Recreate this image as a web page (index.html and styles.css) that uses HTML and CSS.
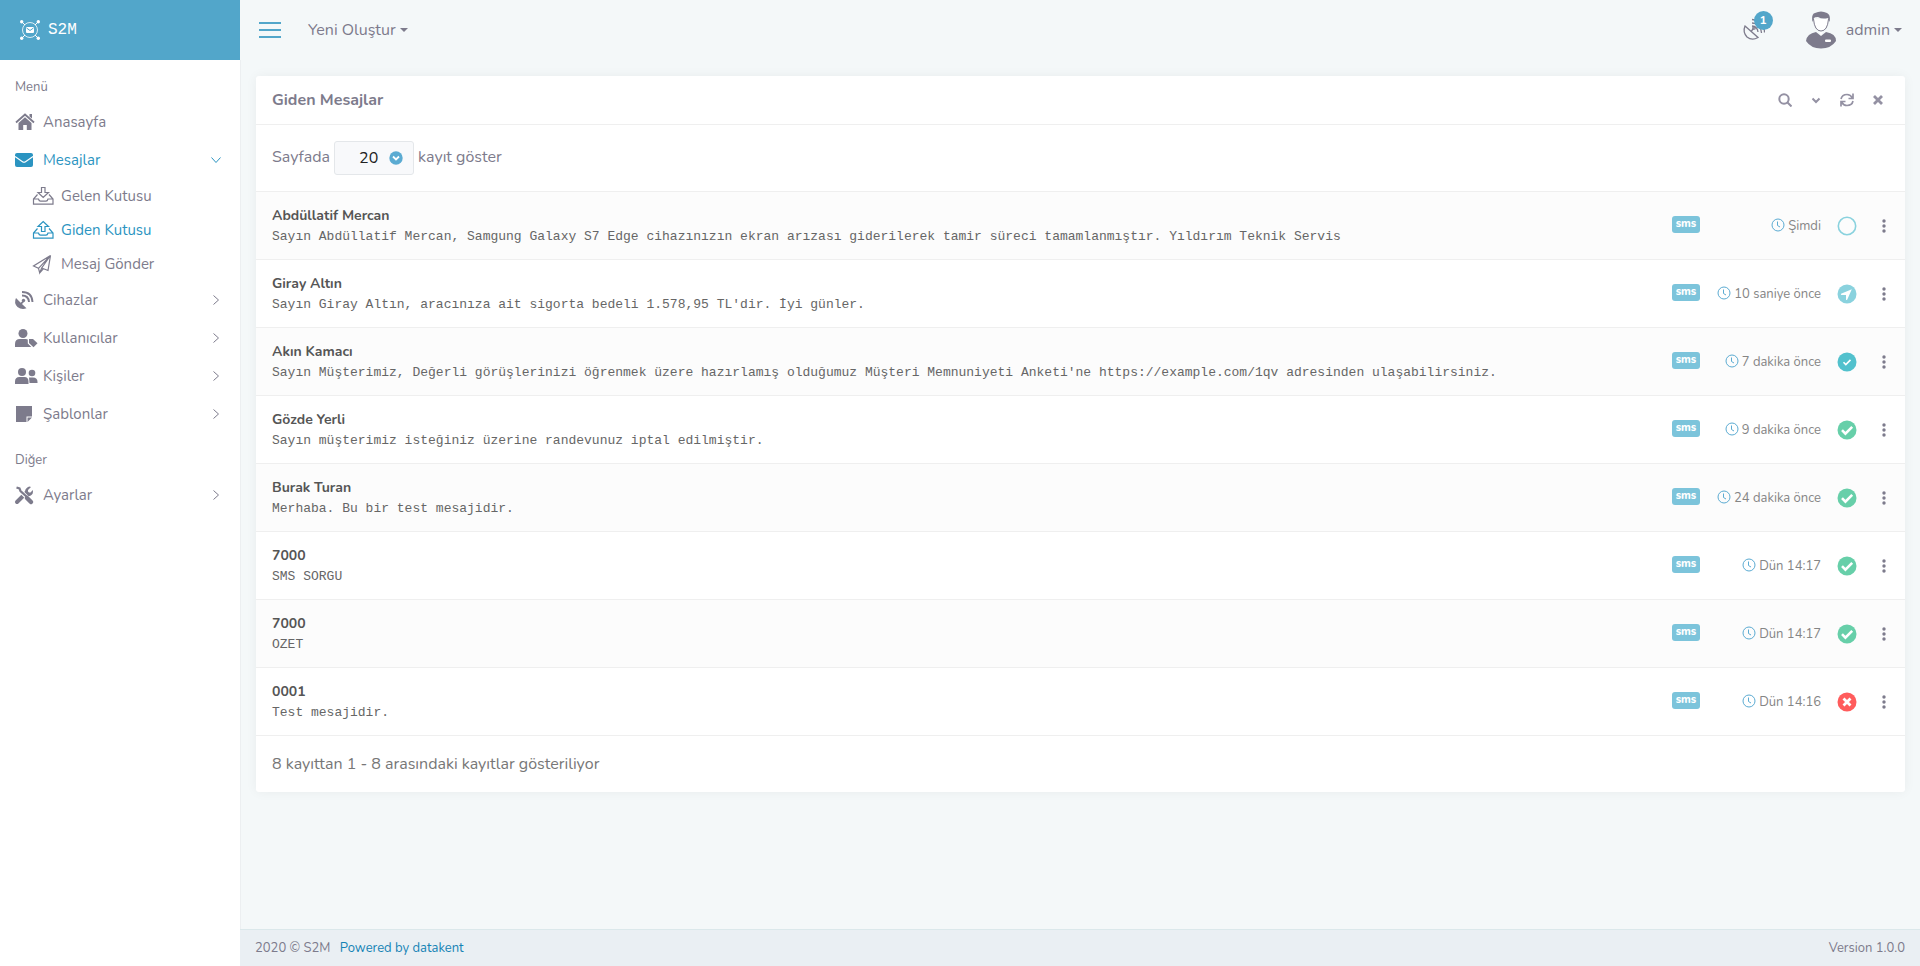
FILE: index.html
```html
<!DOCTYPE html>
<html lang="tr">
<head>
  <meta charset="UTF-8" />
  <meta name="viewport" content="width=device-width, initial-scale=1" />
  <title>S2M | Giden Mesajlar</title>
  <link rel="stylesheet" href="styles.css">
</head>
<body>
  <!-- shared icons -->
  <svg class="sprite" aria-hidden="true">
    <symbol id="chevron" viewBox="0 0 12 12"><path d="M3.500 1.500l5 4.500-5 4.500" fill="none" stroke="currentColor"/></symbol>
    <symbol id="clock" viewBox="0 0 14 14"><circle cx="7" cy="7" r="6" fill="none" stroke="currentColor"/><path d="M6.500 3.500v4l2.500 1.500" fill="none" stroke="currentColor"/></symbol>
    <symbol id="dots" viewBox="0 0 4 14"><circle cx="2" cy="2" r="1.700"/><circle cx="2" cy="7" r="1.700"/><circle cx="2" cy="12" r="1.700"/></symbol>
    <symbol id="queued" viewBox="0 0 20 20"><circle cx="10" cy="10" r="8.700" fill="none" stroke="currentColor" stroke-width="1.600"/></symbol>
    <symbol id="sending" viewBox="0 0 20 20"><circle cx="10" cy="10" r="9.500"/><path d="M14.800 5.200L4 9.800q-.500.900.500 1.200h4.500v4.500q.500 1 1.300 0z" fill="#fff"/></symbol>
    <symbol id="sent" viewBox="0 0 20 20"><circle cx="10" cy="10" r="9.500"/><path d="M6.500 10.300l2.300 2.300 4.700-4.700" fill="none" stroke="#fff" stroke-width="1.600"/></symbol>
    <symbol id="done" viewBox="0 0 20 20"><circle cx="10" cy="10" r="9.500"/><path d="M5 10.200l3.400 3.400 6.800-6.800" fill="none" stroke="#fff" stroke-width="2.600"/></symbol>
    <symbol id="failed" viewBox="0 0 20 20"><circle cx="10" cy="10" r="9.500"/><path d="M6.500 6.500l7 7M13.500 6.500l-7 7" stroke="#fff" stroke-width="2.800"/></symbol>
  </svg>

  <aside class="sidebar">
    <a class="brand" href="#">
      <svg width="20" height="20" viewBox="0 0 20 20" fill="none" stroke="currentColor"><circle cx="10" cy="10" r="7.500" stroke-width=".8"/><path d="M2 2l3 3M18 2l-3 3M2 18l3-3M18 18l-3-3"/><g fill="currentColor" stroke="none"><circle cx="1.700" cy="1.700" r="1.700"/><circle cx="18.300" cy="1.700" r="1.700"/><circle cx="1.700" cy="18.300" r="1.700"/><circle cx="18.300" cy="18.300" r="1.700"/><rect x="6" y="7" width="8" height="6" rx="1"/></g><path d="M6.500 8L10 10.500 13.500 8" stroke="#52a6ca"/></svg>
      <span>S2M</span>
    </a>
    <nav>
      <div class="menu-title">Menü</div>
      <ul class="menu">
        <li><a href="#"><svg class="icon" viewBox="0 0 22 18"><path d="M1 9.500L10 1.500l9 8" fill="none" stroke="currentColor" stroke-width="1.800"/><path d="M14.500 1h2.500v4.500L14.500 3.500zM3.500 10L10 4.300 16.500 10v7h-4.700v-5H8.200v5H3.500z"/></svg>Anasayfa</a></li>
        <li class="open">
          <a class="active" href="#"><svg class="icon" viewBox="0 0 22 18"><path d="M0 4q0-2 2-2h14q2 0 2 2v10q0 2-2 2H2q-2 0-2-2z"/><path d="M0 5.500l7.500 5.200q1.500 1 3 0L18 5.500" fill="none" stroke="#fff" stroke-width="1.100"/></svg>Mesajlar<svg class="arrow" width="12" height="12"><use href="#chevron"/></svg></a>
          <ul class="submenu">
            <li><a href="#"><svg class="icon" viewBox="0 0 22 20" fill="none" stroke="currentColor" stroke-width="1.200"><path d="M8.500 1.500h3.500v5h3.500L10.200 11.500 5 6.500h3.500z"/><path d="M4.500 8.500L.500 13v5.200h19.500V13L16 8.500M.500 13h5q.500 2.200 2 2.200h5.500q1.500 0 2-2.200H20"/></svg>Gelen Kutusu</a></li>
            <li><a class="active" href="#"><svg class="icon" viewBox="0 0 22 20" fill="none" stroke="currentColor" stroke-width="1.200"><path d="M8.500 11.500h3.500v-5h3.500L10.200 1.500 5 6.500h3.500z"/><path d="M4.500 8.500L.500 13v5.200h19.500V13L16 8.500M.500 13h5q.500 2.200 2 2.200h5.500q1.500 0 2-2.200H20"/></svg>Giden Kutusu</a></li>
            <li><a href="#"><svg class="icon" viewBox="0 0 22 20" fill="none" stroke="currentColor" stroke-width="1.200"><path d="M17.500 1.500L.500 12l5 2.300zM17.500 1.500L15 16.500l-6.300-2.500zM5.500 14.300l1.200 4.500 2-4.800M7 18.500l3.500-3.800"/></svg>Mesaj Gönder</a></li>
          </ul>
        </li>
        <li><a href="#"><svg class="icon" viewBox="0 0 22 18"><path d="M1 7l4.700 4.700L7.500 10l1.200 1.200L7 13l4.500 4.300Q6.500 19 2.500 16-1.500 12 1 7z"/><path d="M7 1q10 0 10.500 10M7 4.500q6.500 0 7 6.500" fill="none" stroke="currentColor" stroke-width="1.900"/><circle cx="8.500" cy="9.500" r="1.700"/></svg>Cihazlar<svg class="arrow" width="12" height="12"><use href="#chevron"/></svg></a></li>
        <li><a href="#"><svg class="icon" viewBox="0 0 22 18"><circle cx="8" cy="4.500" r="4.500"/><path d="M0 18v-3q0-5 5-5h6q1 0 1.800.400V14.500l3.500 3.500z"/><path d="M14 10h4l4.500 4.300-4 4L14 14z"/></svg>Kullanıcılar<svg class="arrow" width="12" height="12"><use href="#chevron"/></svg></a></li>
        <li><a href="#"><svg class="icon" viewBox="0 0 22 18"><circle cx="7" cy="5" r="4"/><circle cx="17" cy="6" r="3.300"/><path d="M0 17v-2.500Q0 10 4.500 10h5q4 0 4 4.500V17zM14 10.500h4q4.500 0 4.500 4.500v1h-8z"/></svg>Kişiler<svg class="arrow" width="12" height="12"><use href="#chevron"/></svg></a></li>
        <li><a href="#"><svg class="icon" viewBox="0 0 22 18"><path d="M1 1h16v10.500h-5.500V17H1zM12.500 12.500H17L12.500 17z"/></svg>Şablonlar<svg class="arrow" width="12" height="12"><use href="#chevron"/></svg></a></li>
      </ul>
      <div class="menu-title">Diğer</div>
      <ul class="menu">
        <li><a href="#"><svg class="icon" viewBox="0 0 22 18"><path d="M2 16l9-9" stroke="currentColor" stroke-width="4" stroke-linecap="round"/><path d="M10 7q-.500-4 3-6 1.500-.800 3 0L13 4v1.500l1 1h1.500l2.300-2.500q.800 4-2 5.500T10 9z"/><path d="M3 2.500l11 11" stroke="#fff" stroke-width="4"/><path d="M1.500 1.500l3 1 1 2.500L12 11" fill="none" stroke="currentColor" stroke-width="2.200"/><path d="M12 12l4 4" stroke="currentColor" stroke-width="4.500" stroke-linecap="round"/></svg>Ayarlar<svg class="arrow" width="12" height="12"><use href="#chevron"/></svg></a></li>
      </ul>
    </nav>
  </aside>

  <div class="page">
    <header class="topbar">
      <button class="toggle" aria-label="Menü"><svg width="22" height="16" viewBox="0 0 22 16"><path d="M0 1h22M0 8h22M0 15h22" stroke="currentColor" stroke-width="2"/></svg></button>
      <button class="dropdown create">Yeni Oluştur<span class="caret"></span></button>
      <button class="notify" aria-label="Cihazlar">
        <svg width="24" height="24" viewBox="0 0 24 24" fill="none" stroke="currentColor" stroke-width="1.300"><path d="M4 8L17 19.500Q11 23 6 19 1.500 14 4 8zM10 13.500l2.500-3"/><circle cx="13" cy="10" r="1.200"/><path d="M11 5q9 0 9.500 10M11 1.500q12.500 1 12.500 13M11 8q5.500.500 6 6"/></svg>
        <span class="count">1</span>
      </button>
      <button class="dropdown user">
        <svg width="30" height="38" viewBox="0 0 30 38"><path d="M7.500 8q1 12 7.500 12T22.500 8" fill="#fff" stroke="currentColor"/><path d="M6.500 11Q5 3 9 2q6-3 12 0 4 2 2.500 9l-1.500-4q-6 1.500-10-1-3.500 0-4 1z"/><path d="M10 21l5 4 5-4q10 1.500 10 9-5 7.500-15 7.500T0 30q1-7.500 10-9z"/><path d="M13 21l2 3.500 2-3.500" fill="#fff"/><rect x="19" y="28.500" width="6" height="2.500" rx="1" fill="#fff"/></svg>
        admin<span class="caret"></span>
      </button>
    </header>

    <main>
      <section class="card">
        <div class="card-header">
          <h1>Giden Mesajlar</h1>
          <div class="tools">
            <button aria-label="Ara"><svg width="14" height="14" viewBox="0 0 14 14" fill="none" stroke="currentColor" stroke-width="2"><circle cx="6" cy="6" r="4.700"/><path d="M9.500 9.500l4 4"/></svg></button>
            <button aria-label="Daralt"><svg width="14" height="14" viewBox="0 0 14 14" fill="none" stroke="currentColor" stroke-width="2"><path d="M3.500 5.500L7 9l3.500-3.500"/></svg></button>
            <button aria-label="Yenile"><svg width="14" height="14" viewBox="0 0 14 14" fill="none" stroke="currentColor" stroke-width="1.700"><path d="M1 6Q2 1.500 7 1.500q3.500 0 5.500 3.500M13 .500V5.500H8.500M13 8q-1 4.500-6 4.500Q3.500 12.500 1.500 9M1 13.500V8.500h4.500"/></svg></button>
            <button aria-label="Kapat"><svg width="14" height="14" viewBox="0 0 14 14" stroke="currentColor" stroke-width="2.800"><path d="M3 3l8 8M11 3l-8 8"/></svg></button>
          </div>
        </div>
        <div class="length">
          <label for="page-size">Sayfada</label>
          <span class="select-wrap">
            <select id="page-size"><option>10</option><option selected>20</option><option>50</option></select>
            <svg class="select-icon" width="14" height="14" viewBox="0 0 14 14"><circle cx="7" cy="7" r="6.700" fill="#5babd2"/><path d="M4 5.500l3 3 3-3" fill="none" stroke="#fff" stroke-width="1.800"/></svg>
          </span>
          <span>kayıt göster</span>
        </div>
        <table class="messages">
          <tbody>
            <tr>
              <td><b>Abdüllatif Mercan</b><p>Sayın Abdüllatif Mercan, Samgung Galaxy S7 Edge cihazınızın ekran arızası giderilerek tamir süreci tamamlanmıştır. Yıldırım Teknik Servis</p></td>
              <td class="type"><span class="badge">sms</span></td>
              <td class="time"><svg width="14" height="14"><use href="#clock"/></svg>Şimdi</td>
              <td class="state queued"><svg width="20" height="20"><use href="#queued"/></svg></td>
              <td class="more"><button aria-label="İşlemler"><svg width="4" height="14"><use href="#dots"/></svg></button></td>
            </tr>
            <tr>
              <td><b>Giray Altın</b><p>Sayın Giray Altın, aracınıza ait sigorta bedeli 1.578,95 TL'dir. İyi günler.</p></td>
              <td class="type"><span class="badge">sms</span></td>
              <td class="time"><svg width="14" height="14"><use href="#clock"/></svg>10 saniye önce</td>
              <td class="state queued"><svg width="20" height="20"><use href="#sending"/></svg></td>
              <td class="more"><button aria-label="İşlemler"><svg width="4" height="14"><use href="#dots"/></svg></button></td>
            </tr>
            <tr>
              <td><b>Akın Kamacı</b><p>Sayın Müşterimiz, Değerli görüşlerinizi öğrenmek üzere hazırlamış olduğumuz Müşteri Memnuniyeti Anketi'ne https://example.com/1qv adresinden ulaşabilirsiniz.</p></td>
              <td class="type"><span class="badge">sms</span></td>
              <td class="time"><svg width="14" height="14"><use href="#clock"/></svg>7 dakika önce</td>
              <td class="state sent"><svg width="20" height="20"><use href="#sent"/></svg></td>
              <td class="more"><button aria-label="İşlemler"><svg width="4" height="14"><use href="#dots"/></svg></button></td>
            </tr>
            <tr>
              <td><b>Gözde Yerli</b><p>Sayın müşterimiz isteğiniz üzerine randevunuz iptal edilmiştir.</p></td>
              <td class="type"><span class="badge">sms</span></td>
              <td class="time"><svg width="14" height="14"><use href="#clock"/></svg>9 dakika önce</td>
              <td class="state done"><svg width="20" height="20"><use href="#done"/></svg></td>
              <td class="more"><button aria-label="İşlemler"><svg width="4" height="14"><use href="#dots"/></svg></button></td>
            </tr>
            <tr>
              <td><b>Burak Turan</b><p>Merhaba. Bu bir test mesajidir.</p></td>
              <td class="type"><span class="badge">sms</span></td>
              <td class="time"><svg width="14" height="14"><use href="#clock"/></svg>24 dakika önce</td>
              <td class="state done"><svg width="20" height="20"><use href="#done"/></svg></td>
              <td class="more"><button aria-label="İşlemler"><svg width="4" height="14"><use href="#dots"/></svg></button></td>
            </tr>
            <tr>
              <td><b>7000</b><p>SMS SORGU</p></td>
              <td class="type"><span class="badge">sms</span></td>
              <td class="time"><svg width="14" height="14"><use href="#clock"/></svg>Dün 14:17</td>
              <td class="state done"><svg width="20" height="20"><use href="#done"/></svg></td>
              <td class="more"><button aria-label="İşlemler"><svg width="4" height="14"><use href="#dots"/></svg></button></td>
            </tr>
            <tr>
              <td><b>7000</b><p>OZET</p></td>
              <td class="type"><span class="badge">sms</span></td>
              <td class="time"><svg width="14" height="14"><use href="#clock"/></svg>Dün 14:17</td>
              <td class="state done"><svg width="20" height="20"><use href="#done"/></svg></td>
              <td class="more"><button aria-label="İşlemler"><svg width="4" height="14"><use href="#dots"/></svg></button></td>
            </tr>
            <tr>
              <td><b>0001</b><p>Test mesajidir.</p></td>
              <td class="type"><span class="badge">sms</span></td>
              <td class="time"><svg width="14" height="14"><use href="#clock"/></svg>Dün 14:16</td>
              <td class="state failed"><svg width="20" height="20"><use href="#failed"/></svg></td>
              <td class="more"><button aria-label="İşlemler"><svg width="4" height="14"><use href="#dots"/></svg></button></td>
            </tr>
          </tbody>
        </table>
        <div class="info">8 kayıttan 1 - 8 arasındaki kayıtlar gösteriliyor</div>
      </section>
    </main>

    <footer class="footer">
      <div>2020 © S2M <a href="#">Powered by datakent</a></div>
      <div>Version 1.0.0</div>
    </footer>
  </div>
</body>
</html>
```
FILE: styles.css
```css
* { box-sizing: border-box; }
body {
  margin: 0;
  display: flex;
  min-height: 100vh;
  font: 16px/24px Nunito, Lato, sans-serif;
  color: #7d7b8c;
  background: #f4f8f9;
}
a { color: inherit; text-decoration: none; }
ul { list-style: none; margin: 0; padding: 0; }
svg { flex: none; }
svg:not([fill]) { fill: currentColor; }
button { border: 0; background: none; padding: 0; font: inherit; color: inherit; cursor: pointer; }
.sprite { position: absolute; width: 0; height: 0; }

/* sidebar */
.sidebar { width: 240px; flex: none; background: #fff; }
.sidebar nav { min-height: calc(100% - 60px); box-shadow: 1px 0 #eceff1; }
.brand {
  display: flex;
  align-items: center;
  gap: 8px;
  height: 60px;
  padding-left: 20px;
  background: #52a6ca;
  color: #fff;
  font: 16px "Liberation Mono", monospace;
}
.menu-title { padding: 16px 15px 0; font-size: 13px; line-height: 22px; }
.menu { padding-top: 5px; font-size: 15px; }
.menu a { display: flex; align-items: center; height: 38px; padding: 0 18px 0 15px; }
.menu .icon { width: 22px; height: 18px; margin-right: 6px; overflow: visible; }
.menu .arrow { margin-left: auto; }
.menu .open > a .arrow { transform: rotate(90deg); }
.menu .active { color: #2b94c1; }
.menu .submenu a { height: 34px; padding-left: 33px; }
.menu .submenu .icon { height: 20px; }

/* content */
.page { flex: 1; min-width: 0; display: flex; flex-direction: column; }
.topbar { display: flex; align-items: center; height: 60px; padding: 0 18px 0 19px; }
.toggle { display: flex; color: #52a6ca; }
.dropdown { display: flex; align-items: center; }
.create { margin-left: 27px; }
.caret { margin-left: 4px; border: 4px solid transparent; border-top-color: currentColor; border-bottom: 0; }
.notify { position: relative; display: flex; margin-left: auto; }
.count {
  position: absolute;
  top: -7px;
  left: 13px;
  width: 19px;
  height: 19px;
  border-radius: 50%;
  background: #52a6ca;
  color: #fff;
  font-size: 12px;
  font-weight: bold;
  line-height: 19px;
}
.user { margin-left: 41px; }
.user svg { margin-right: 10px; }

main { flex: 1; padding: 16px 15px 16px 16px; }
.card { background: #fff; border-radius: 3px; box-shadow: 0 0 12px rgba(0, 0, 0, 0.05); }
.card-header { display: flex; align-items: center; justify-content: space-between; height: 49px; padding: 0 20px 0 16px; border-bottom: 1px solid #efefef; }
.card-header h1 { margin: 0; font-size: 16px; font-weight: bold; }
.tools { display: flex; gap: 17px; color: #9491a3; }
.tools button { display: flex; }
.length { display: flex; align-items: flex-start; gap: 4px; padding: 16px; line-height: 32px; }
.select-wrap { position: relative; display: flex; }
.length select {
  appearance: none;
  width: 80px;
  height: 34px;
  padding: 0 24px;
  border: 1px solid #e4e7ea;
  border-radius: 3px;
  background: #f8f9fb;
  color: #222;
  font: inherit;
}
.select-icon { position: absolute; right: 11px; top: 10px; pointer-events: none; }

.messages { width: 100%; border-collapse: collapse; font-size: 13px; }
.messages td { height: 68px; padding: 0; border-top: 1px solid #efefef; }
.messages tr:nth-child(odd) { background: #fcfcfc; }
.messages tr:last-child td { border-bottom: 1px solid #efefef; }
.messages td:first-child { padding-left: 16px; }
.messages b { display: block; font-size: 14px; line-height: 22px; color: #555; }
.messages p { margin: 0; font: 13px/20px "Courier New", "Liberation Mono", monospace; color: #666; }
.messages .type { width: 45px; }
.badge { display: block; width: 28px; height: 17px; margin-bottom: 2px; border-radius: 3px; background: #7cc4db; color: #fff; font-size: 11px; font-weight: 800; line-height: 16px; text-align: center; }
.messages .time { width: 102px; text-align: right; white-space: nowrap; color: #858585; }
.time svg { margin-right: 3px; vertical-align: -2px; color: #5babd2; }
.messages .state { width: 51px; text-align: center; }
.state svg { display: block; margin: 0 auto; }
.messages .more { width: 33px; }
.more button { display: flex; padding: 0 10px; }
.queued { color: #8ad2de; }
.sent { color: #52c1cd; }
.done { color: #67cfa9; }
.failed { color: #ff5c5c; }
.info { padding: 16px; color: #777; }

.footer { display: flex; align-items: center; justify-content: space-between; height: 37px; padding: 0 15px; border-top: 1px solid #dbe8eb; background: #eaeff3; font-size: 13px; }
.footer a { margin-left: 6px; color: #1583b5; }
```
